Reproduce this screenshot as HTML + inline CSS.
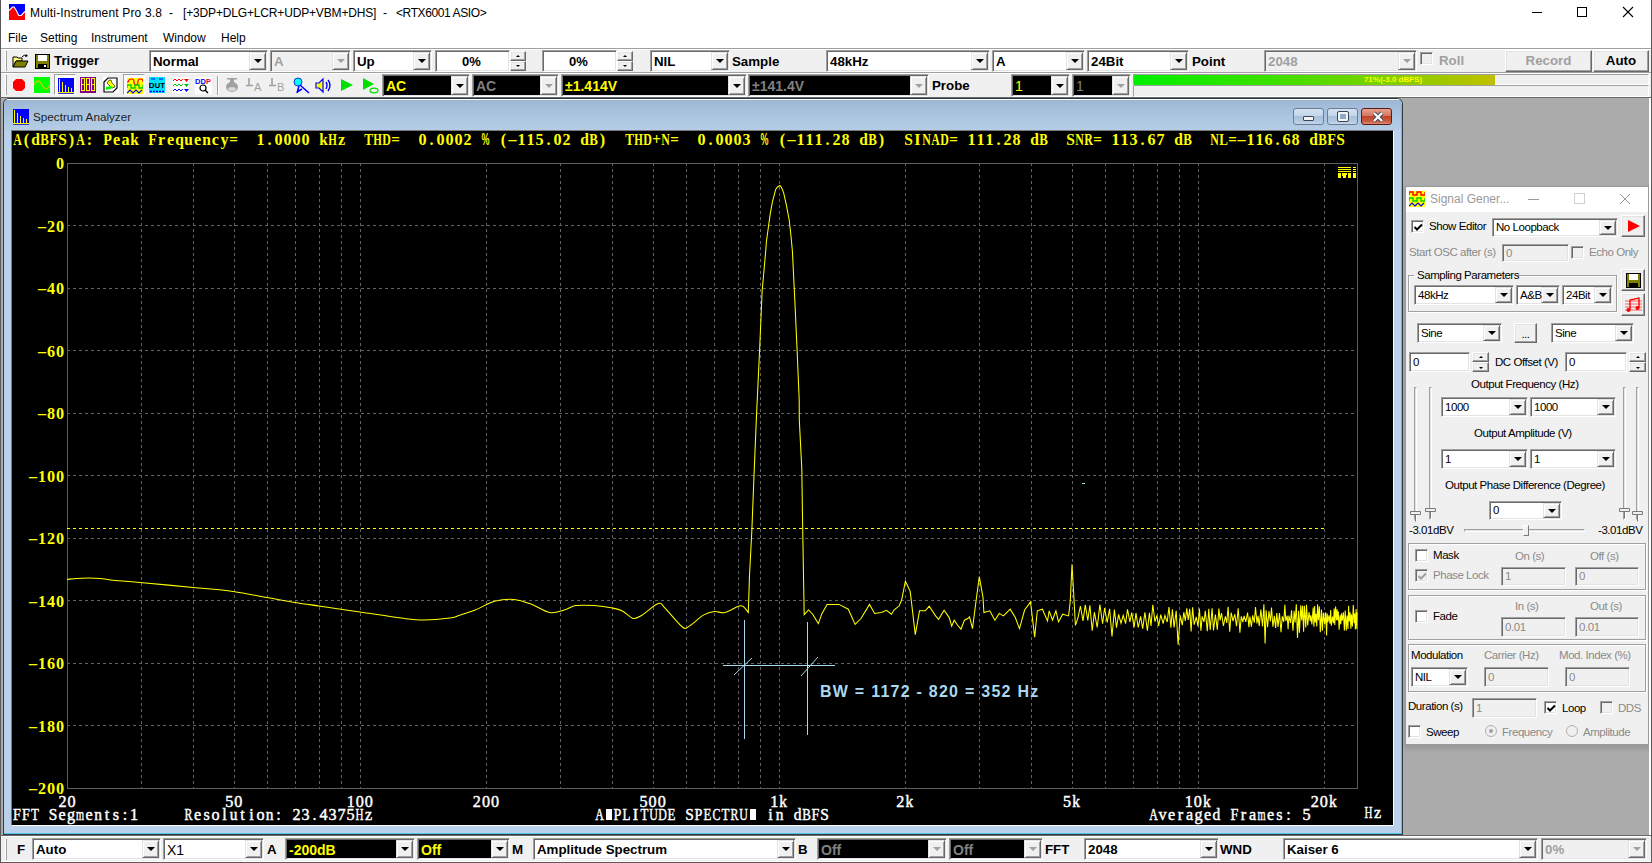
<!DOCTYPE html><html><head><meta charset="utf-8"><style>
*{box-sizing:border-box;margin:0;padding:0}
html,body{width:1652px;height:863px;overflow:hidden;background:#f0f0f0;font-family:"Liberation Sans",sans-serif;position:relative}
.a{position:absolute}
.t{position:absolute;white-space:nowrap;line-height:1}
/* sunken combo */
.cb{position:absolute;background:#fff;border:1px solid;border-color:#a0a0a0 #fff #fff #a0a0a0;box-shadow:inset 1px 1px #696969,inset -1px -1px #e3e3e3}
.cb.dis{background:#f0f0f0}
.cb.blk{background:#000}
.dd{position:absolute;top:1px;bottom:1px;right:1px;width:17px;background:#f0f0f0;border:1px solid;border-color:#e3e3e3 #696969 #696969 #e3e3e3;box-shadow:inset 1px 1px #fff,inset -1px -1px #a0a0a0}
.dd:after{content:"";position:absolute;left:50%;top:50%;margin-left:-4px;margin-top:-2px;border-left:4px solid transparent;border-right:4px solid transparent;border-top:4px solid #000}
.dd.g:after{border-top-color:#a0a0a0}
.btn{position:absolute;background:#f0f0f0;border:1px solid;border-color:#fff #696969 #696969 #fff;box-shadow:inset -1px -1px #a0a0a0,inset 1px 1px #e3e3e3}
.chk{position:absolute;width:13px;height:13px;background:#fff;border:1px solid;border-color:#a0a0a0 #fff #fff #a0a0a0;box-shadow:inset 1px 1px #696969,inset -1px -1px #e3e3e3}
.chk.dis{background:#f0f0f0}
</style></head><body>
<div class="a" style="left:0px;top:0px;width:1652px;height:48px;background:#fff"></div>
<div class="a" style="left:0px;top:0px;width:1px;height:863px;background:#5a5a5a"></div>
<div class="a" style="left:1651px;top:0px;width:1px;height:863px;background:#5a5a5a"></div>
<svg class="a" style="left:9px;top:4px" width="16" height="16" viewBox="0 0 16 16"><rect width="16" height="16" fill="#0000ff"/><path d="M0 6.5L3.5 3H5L7 6L9.8 11.5H12.2L16 7.5V16H0Z" fill="#ff0000"/><path d="M0 6.5L3.5 3H5L7 6L9.8 11.5H12.2L16 7.5" stroke="#fff" stroke-width="1.1" fill="none"/></svg>
<div class="t" style="left:30px;top:7px;font-size:12px;color:#000;font-weight:normal;font-family:'Liberation Sans', sans-serif;letter-spacing:0.17px">Multi-Instrument Pro 3.8</div>
<div class="t" style="left:169px;top:7px;font-size:12px;color:#000;font-weight:normal;font-family:'Liberation Sans', sans-serif;">-</div>
<div class="t" style="left:183px;top:7px;font-size:12px;color:#000;font-weight:normal;font-family:'Liberation Sans', sans-serif;letter-spacing:-0.16px">[+3DP+DLG+LCR+UDP+VBM+DHS]</div>
<div class="t" style="left:383px;top:7px;font-size:12px;color:#000;font-weight:normal;font-family:'Liberation Sans', sans-serif;">-</div>
<div class="t" style="left:396px;top:7px;font-size:12px;color:#000;font-weight:normal;font-family:'Liberation Sans', sans-serif;letter-spacing:-0.4px">&lt;RTX6001 ASIO&gt;</div>
<div class="a" style="left:1532px;top:12px;width:10px;height:1px;background:#000"></div>
<div class="a" style="left:1577px;top:7px;width:10px;height:10px;border:1px solid #000"></div>
<svg class="a" style="left:1622px;top:6px" width="12" height="12"><path d="M1 1L11 11M11 1L1 11" stroke="#000" stroke-width="1.1"/></svg>
<div class="t" style="left:8px;top:32px;font-size:12px;color:#000;font-weight:normal;font-family:'Liberation Sans', sans-serif;">File</div>
<div class="t" style="left:40px;top:32px;font-size:12px;color:#000;font-weight:normal;font-family:'Liberation Sans', sans-serif;">Setting</div>
<div class="t" style="left:91px;top:32px;font-size:12px;color:#000;font-weight:normal;font-family:'Liberation Sans', sans-serif;">Instrument</div>
<div class="t" style="left:163px;top:32px;font-size:12px;color:#000;font-weight:normal;font-family:'Liberation Sans', sans-serif;">Window</div>
<div class="t" style="left:221px;top:32px;font-size:12px;color:#000;font-weight:normal;font-family:'Liberation Sans', sans-serif;">Help</div>
<div class="a" style="left:1px;top:48px;width:1650px;height:1px;background:#a0a0a0"></div>
<div class="a" style="left:1px;top:72px;width:1650px;height:1px;background:#a0a0a0"></div>
<div class="a" style="left:1px;top:73px;width:1650px;height:1px;background:#fff"></div>
<div class="a" style="left:1px;top:49px;width:1650px;height:1px;background:#fff"></div>
<div class="a" style="left:5px;top:51px;width:1px;height:20px;background:#fff"></div>
<div class="a" style="left:6px;top:51px;width:1px;height:20px;background:#a0a0a0"></div>
<div class="a" style="left:5px;top:75px;width:1px;height:20px;background:#fff"></div>
<div class="a" style="left:6px;top:75px;width:1px;height:20px;background:#a0a0a0"></div>
<svg class="a" style="left:12px;top:53px" width="17" height="16" viewBox="0 0 17 16"><path d="M1 4h4l1 1h4v3H4L1 14Z" fill="#ffff80" stroke="#000"/><path d="M1 14L4 8h12l-3 6Z" fill="#808000" stroke="#000"/><path d="M10 4Q12 1 15 3" stroke="#000" fill="none"/><path d="M14 1l2 2-3 1" fill="#000"/></svg>
<svg class="a" style="left:35px;top:54px" width="15" height="15" viewBox="0 0 15 15"><rect x="0.5" y="0.5" width="14" height="14" fill="#808000" stroke="#000"/><rect x="3" y="1" width="9" height="6" fill="#fff"/><rect x="3" y="10" width="9" height="4" fill="#000"/><rect x="9" y="11" width="2" height="2" fill="#fff"/></svg>
<div class="t" style="left:54px;top:54px;font-size:13.3px;color:#000;font-weight:bold;font-family:'Liberation Sans', sans-serif;">Trigger</div>
<div class="cb" style="left:149px;top:50px;width:119px;height:22px;"><div class="dd "></div></div>
<div class="t" style="left:153px;top:55.0px;font-size:13.3px;color:#000;font-weight:bold;font-family:'Liberation Sans', sans-serif;">Normal</div>
<div class="cb dis" style="left:270px;top:50px;width:81px;height:22px;"><div class="dd g"></div></div>
<div class="t" style="left:274px;top:55.0px;font-size:13.3px;color:#a0a0a0;font-weight:bold;font-family:'Liberation Sans', sans-serif;">A</div>
<div class="cb" style="left:353px;top:50px;width:79px;height:22px;"><div class="dd "></div></div>
<div class="t" style="left:357px;top:55.0px;font-size:13.3px;color:#000;font-weight:bold;font-family:'Liberation Sans', sans-serif;">Up</div>
<div class="cb" style="left:435px;top:50px;width:75px;height:22px;"></div>
<div class="t" style="left:435px;top:55px;font-size:13px;color:#000;font-weight:bold;font-family:'Liberation Sans', sans-serif;width:73px;text-align:center">0%</div>
<div class="btn" style="left:510px;top:51px;width:16px;height:10px;"><div class="a" style="left:5px;top:3px;width:0;height:0;border-left:2px solid transparent;border-right:2px solid transparent;border-bottom:2px solid #000"></div></div>
<div class="btn" style="left:510px;top:61px;width:16px;height:10px;"><div class="a" style="left:5px;top:3px;width:0;height:0;border-left:2px solid transparent;border-right:2px solid transparent;border-top:2px solid #000"></div></div>
<div class="cb" style="left:542px;top:50px;width:75px;height:22px;"></div>
<div class="t" style="left:542px;top:55px;font-size:13px;color:#000;font-weight:bold;font-family:'Liberation Sans', sans-serif;width:73px;text-align:center">0%</div>
<div class="btn" style="left:617px;top:51px;width:16px;height:10px;"><div class="a" style="left:5px;top:3px;width:0;height:0;border-left:2px solid transparent;border-right:2px solid transparent;border-bottom:2px solid #000"></div></div>
<div class="btn" style="left:617px;top:61px;width:16px;height:10px;"><div class="a" style="left:5px;top:3px;width:0;height:0;border-left:2px solid transparent;border-right:2px solid transparent;border-top:2px solid #000"></div></div>
<div class="cb" style="left:650px;top:50px;width:80px;height:22px;"><div class="dd "></div></div>
<div class="t" style="left:654px;top:55.0px;font-size:13.3px;color:#000;font-weight:bold;font-family:'Liberation Sans', sans-serif;">NIL</div>
<div class="t" style="left:732px;top:55px;font-size:13.3px;color:#000;font-weight:bold;font-family:'Liberation Sans', sans-serif;">Sample</div>
<div class="cb" style="left:826px;top:50px;width:164px;height:22px;"><div class="dd "></div></div>
<div class="t" style="left:830px;top:55.0px;font-size:13.3px;color:#000;font-weight:bold;font-family:'Liberation Sans', sans-serif;">48kHz</div>
<div class="cb" style="left:992px;top:50px;width:93px;height:22px;"><div class="dd "></div></div>
<div class="t" style="left:996px;top:55.0px;font-size:13.3px;color:#000;font-weight:bold;font-family:'Liberation Sans', sans-serif;">A</div>
<div class="cb" style="left:1087px;top:50px;width:102px;height:22px;"><div class="dd "></div></div>
<div class="t" style="left:1091px;top:55.0px;font-size:13.3px;color:#000;font-weight:bold;font-family:'Liberation Sans', sans-serif;">24Bit</div>
<div class="t" style="left:1192px;top:55px;font-size:13.3px;color:#000;font-weight:bold;font-family:'Liberation Sans', sans-serif;">Point</div>
<div class="cb dis" style="left:1264px;top:50px;width:153px;height:22px;"><div class="dd g"></div></div>
<div class="t" style="left:1268px;top:55.0px;font-size:13.3px;color:#a0a0a0;font-weight:bold;font-family:'Liberation Sans', sans-serif;">2048</div>
<div class="chk dis" style="left:1420px;top:52px;width:13px;height:13px;"></div>
<div class="t" style="left:1439px;top:54px;font-size:13.3px;color:#a0a0a0;font-weight:bold;font-family:'Liberation Sans', sans-serif;">Roll</div>
<div class="btn" style="left:1505px;top:50px;width:87px;height:22px;"></div>
<div class="t" style="left:1505px;top:54px;font-size:13.3px;color:#a0a0a0;font-weight:bold;font-family:'Liberation Sans', sans-serif;width:87px;text-align:center">Record</div>
<div class="btn" style="left:1593px;top:50px;width:56px;height:22px;"></div>
<div class="t" style="left:1593px;top:54px;font-size:13.3px;color:#000;font-weight:bold;font-family:'Liberation Sans', sans-serif;width:56px;text-align:center">Auto</div>
<svg class="a" style="left:12px;top:78px" width="14" height="14" viewBox="0 0 14 14"><path d="M4 1h6l3 3v6l-3 3H4L1 10V4Z" fill="#ff0000"/></svg>
<svg class="a" style="left:34px;top:77px" width="16" height="16" viewBox="0 0 16 16"><rect width="16" height="16" fill="#00ff00"/><path d="M0 8Q4 0 8 8T16 8" stroke="#c8c800" stroke-width="1.3" fill="none"/></svg>
<div class="a" style="left:54px;top:74px;width:22px;height:21px;border:1px solid;border-color:#a0a0a0 #fff #fff #a0a0a0;background:#fafafa"></div>
<svg class="a" style="left:58px;top:78px" width="16" height="16" viewBox="0 0 16 16"><rect width="16" height="16" fill="#0000ff"/><path d="M1.5 1v13M4.5 4v10M7.5 7v7M10.5 9v5M13.5 10v4" stroke="#ffff00" stroke-width="1"/><rect x="0" y="14" width="16" height="1.2" fill="#ffff00"/></svg>
<svg class="a" style="left:80px;top:77px" width="16" height="16" viewBox="0 0 16 16"><rect width="16" height="16" fill="#800080"/><g fill="none" stroke="#ffff00" stroke-width="1"><rect x="1.5" y="1.5" width="3" height="6"/><rect x="1.5" y="7.5" width="3" height="6"/><rect x="6.5" y="1.5" width="3" height="6"/><rect x="6.5" y="7.5" width="3" height="6"/><rect x="11.5" y="1.5" width="3" height="6"/><rect x="11.5" y="7.5" width="3" height="6"/></g></svg>
<svg class="a" style="left:103px;top:77px" width="16" height="16" viewBox="0 0 16 16"><rect width="16" height="16" fill="#fff"/><path d="M1 5L5 1h9v10l-4 4H1Z" fill="#fff" stroke="#000" stroke-width="1.2"/><path d="M4 6q2-4 4-3l1 3q3 2 3 4l-3 1Z" fill="#ffff00" stroke="#000" stroke-width="0.6"/><path d="M3 10l5-1 2 2-3 1-4 1Z" fill="#00ff00"/></svg>
<div class="a" style="left:123px;top:74px;width:22px;height:21px;border:1px solid;border-color:#a0a0a0 #fff #fff #a0a0a0;background:#fafafa"></div>
<svg class="a" style="left:127px;top:78px" width="16" height="16" viewBox="0 0 16 16"><rect width="16" height="16" fill="#ffff00"/><path d="M0 4h1Q2 1 4 1h1q2 0 2 3t2 3h0q2 0 2-3t2-3h1q2 0 2 3" stroke="#ff0000" fill="none" stroke-width="1.2"/><path d="M0 10V7h4v3h4V7h4v3h4V7" stroke="#00d000" fill="none" stroke-width="1.4"/><path d="M0 15l3-3 3 3 3-3 3 3 3-3" stroke="#0000ff" fill="none" stroke-width="1.1"/></svg>
<svg class="a" style="left:149px;top:77px" width="16" height="16" viewBox="0 0 16 16"><rect width="16" height="16" fill="#00e0ff"/><path d="M2 2h4M10 2h4" stroke="#0000ff"/><text x="8" y="11" font-size="8" font-weight="bold" fill="#000" text-anchor="middle" font-family="Liberation Sans">DUT</text><path d="M1 14.5h14" stroke="#0000ff" stroke-width="1.5" stroke-dasharray="2 1"/></svg>
<svg class="a" style="left:172px;top:77px;background:#fff" width="17" height="16" viewBox="0 0 17 16"><g fill="none" stroke-width="1"><path d="M1 4l2-2 2 2 2-2 2 2 2-2" stroke="#ff0000"/><path d="M1 9l2-2 2 2 2-2 2 2 2-2" stroke="#00c000"/><path d="M1 14l2-2 2 2 2-2 2 2 2-2" stroke="#0000ff"/></g><path d="M12 2h5l-2.5 3Z" fill="#ff0000"/><path d="M12 7h5l-2.5 3Z" fill="#00c000"/><path d="M12 12h5l-2.5 3Z" fill="#0000ff"/></svg>
<svg class="a" style="left:195px;top:77px;background:#fff" width="17" height="17" viewBox="0 0 17 17"><text x="0" y="7" font-size="7.5" font-weight="bold" fill="#0000ff" font-family="Liberation Sans">DD</text><text x="11" y="7" font-size="7.5" font-weight="bold" fill="#ff0000" font-family="Liberation Sans">P</text><circle cx="8" cy="11" r="3" fill="none" stroke="#000" stroke-width="1.2"/><path d="M10 13l3 3" stroke="#000" stroke-width="1.5"/></svg>
<div class="a" style="left:217px;top:76px;width:1px;height:19px;background:#a0a0a0"></div>
<div class="a" style="left:218px;top:76px;width:1px;height:19px;background:#fff"></div>
<svg class="a" style="left:224px;top:77px" width="16" height="16" viewBox="0 0 16 16"><rect x="6" y="1" width="4" height="5" fill="#a0a0a0"/><rect x="3" y="1" width="10" height="1.5" fill="#a0a0a0"/><ellipse cx="8" cy="10" rx="6" ry="5" fill="#a0a0a0"/><ellipse cx="8" cy="12" rx="4" ry="2" fill="#d8d8d8"/></svg>
<svg class="a" style="left:246px;top:78px" width="18" height="14" viewBox="0 0 18 14"><path d="M3 0v7M0 7.5h7" stroke="#a0a0a0" stroke-width="1.6"/><text x="8" y="13" font-size="11" fill="#a0a0a0" font-family="Liberation Sans">A</text></svg>
<svg class="a" style="left:269px;top:78px" width="18" height="14" viewBox="0 0 18 14"><path d="M3 0v7M0 7.5h7" stroke="#a0a0a0" stroke-width="1.6"/><text x="8" y="13" font-size="11" fill="#a0a0a0" font-family="Liberation Sans">B</text></svg>
<svg class="a" style="left:293px;top:77px" width="18" height="17" viewBox="0 0 18 17"><circle cx="5" cy="5" r="4" fill="#00ffff" stroke="#0000c0" stroke-width="0.8"/><path d="M7 8l9 8M6 9l-2 7M9 12l-5 3" stroke="#0000ff" stroke-width="1.6"/></svg>
<svg class="a" style="left:315px;top:77px" width="18" height="17" viewBox="0 0 18 17"><path d="M1 6h3l4-4v13l-4-4H1Z" fill="#ffff00" stroke="#0000ff" stroke-width="1.2"/><path d="M11 5q2 3 0 7M13 3q4 5 0 11" stroke="#0000ff" stroke-width="1.4" fill="none"/></svg>
<svg class="a" style="left:341px;top:79px" width="12" height="12" viewBox="0 0 12 12"><path d="M0 0L12 6L0 12Z" fill="#00e000"/></svg>
<svg class="a" style="left:363px;top:78px" width="16" height="16" viewBox="0 0 16 16"><path d="M0 0L11 6L0 12Z" fill="#00e000"/><ellipse cx="11" cy="12.5" rx="4" ry="2.3" fill="none" stroke="#00e000" stroke-width="1.2"/></svg>
<div class="cb blk" style="left:382px;top:74px;width:88px;height:23px;"><div class="dd "></div></div>
<div class="t" style="left:386px;top:79px;font-size:14px;color:#ffff00;font-weight:bold;font-family:'Liberation Sans', sans-serif;">AC</div>
<div class="cb blk" style="left:472px;top:74px;width:87px;height:23px;"><div class="dd g"></div></div>
<div class="t" style="left:476px;top:79px;font-size:14px;color:#808080;font-weight:bold;font-family:'Liberation Sans', sans-serif;">AC</div>
<div class="cb blk" style="left:561px;top:74px;width:186px;height:23px;"><div class="dd "></div></div>
<div class="t" style="left:565px;top:79px;font-size:14px;color:#ffff00;font-weight:bold;font-family:'Liberation Sans', sans-serif;">±1.414V</div>
<div class="cb blk" style="left:748px;top:74px;width:181px;height:23px;"><div class="dd g"></div></div>
<div class="t" style="left:752px;top:79px;font-size:14px;color:#808080;font-weight:bold;font-family:'Liberation Sans', sans-serif;">±141.4V</div>
<div class="t" style="left:932px;top:79px;font-size:13.3px;color:#000;font-weight:bold;font-family:'Liberation Sans', sans-serif;">Probe</div>
<div class="cb blk" style="left:1011px;top:74px;width:59px;height:23px;"><div class="dd "></div></div>
<div class="t" style="left:1015px;top:79px;font-size:14px;color:#ffff00;font-weight:normal;font-family:'Liberation Sans', sans-serif;">1</div>
<div class="cb blk" style="left:1072px;top:74px;width:59px;height:23px;"><div class="dd g"></div></div>
<div class="t" style="left:1076px;top:79px;font-size:14px;color:#808080;font-weight:normal;font-family:'Liberation Sans', sans-serif;">1</div>
<div class="a" style="left:1133px;top:74px;width:516px;height:11px;border:1px solid;border-color:#a0a0a0 #fff #fff #a0a0a0;background:#f0f0f0"></div>
<div class="a" style="left:1134px;top:75px;width:361px;height:10px;background:linear-gradient(90deg,#00f000,#40e000 40%,#c0c000)"></div>
<div class="t" style="left:1134px;top:76px;font-size:8px;color:#ffff00;font-weight:bold;font-family:'Liberation Sans', sans-serif;width:518px;text-align:center">71%(-3.0 dBFS)</div>
<div class="a" style="left:1133px;top:85px;width:516px;height:12px;border:1px solid;border-color:#a0a0a0 #fff #fff #a0a0a0;background:#f0f0f0"></div>
<div class="a" style="left:1px;top:97px;width:1650px;height:1px;background:#696969"></div>
<div class="a" style="left:1px;top:98px;width:1650px;height:738px;background:#ababab"></div>
<div class="a" style="left:3px;top:98px;width:1400px;height:737px;background:#2f3a45;border-radius:6px 6px 0 0"></div>
<div class="a" style="left:4px;top:99px;width:1398px;height:735px;background:#b9d1ea;border-radius:5px 5px 0 0"></div>
<div class="a" style="left:4px;top:99px;width:1398px;height:31px;background:linear-gradient(#fff 0,#fff 1px,#9cb6d4 1px,#a8c2de 14px,#b4cce6 30px);border-radius:5px 5px 0 0"></div>
<div class="a" style="left:1401px;top:104px;width:1px;height:730px;background:#4cc8ea"></div>
<div class="a" style="left:4px;top:833px;width:1398px;height:1px;background:#4cc8ea"></div>
<svg class="a" style="left:13px;top:109px" width="16" height="16" viewBox="0 0 16 16"><rect width="16" height="16" fill="#0000ff"/><path d="M1.5 1v13M4.5 4v10M7.5 7v7M10.5 9v5M13.5 10v4" stroke="#ffff00" stroke-width="1" shape-rendering="crispEdges"/><rect x="0" y="14" width="16" height="1.2" fill="#ffff00"/></svg>
<div class="t" style="left:33px;top:111px;font-size:11.7px;color:#1e1e1e;font-weight:normal;font-family:'Liberation Sans', sans-serif;">Spectrum Analyzer</div>
<div class="a" style="left:1293px;top:108px;width:31px;height:17px;background:linear-gradient(#d4e2f1,#c3d5ea 45%,#a9c1dc 50%,#b1c8e2 80%,#c6d8ec);border:1px solid #6a7d95;border-radius:3px"><div class="a" style="left:9px;top:7px;width:11px;height:5px;background:#f4f4f4;border:1px solid #3c4656;border-radius:1px"></div></div>
<div class="a" style="left:1327px;top:108px;width:31px;height:17px;background:linear-gradient(#d4e2f1,#c3d5ea 45%,#a9c1dc 50%,#b1c8e2 80%,#c6d8ec);border:1px solid #6a7d95;border-radius:3px"><div class="a" style="left:10px;top:3px;width:10px;height:9px;border:2px solid #f4f4f4;outline:1px solid #3c4656;border-radius:1px;background:#8ea8c8"></div></div>
<div class="a" style="left:1361px;top:108px;width:31px;height:17px;background:linear-gradient(#e8a08e,#d47762 45%,#c0442a 50%,#c85a3e 80%,#e08a70);border:1px solid #5a1a18;border-radius:3px"><svg class="a" style="left:9px;top:2px" width="14" height="12"><path d="M3 2L11 10M11 2L3 10" stroke="#3c4656" stroke-width="4"/><path d="M3 2L11 10M11 2L3 10" stroke="#fafafa" stroke-width="2.4"/></svg></div>
<div class="a" style="left:11px;top:130px;width:1383px;height:696px;background:#000;border-top:1px solid #7a7a7a;border-left:1px solid #7a7a7a;border-right:1px solid #fff;border-bottom:1px solid #fff"></div>
<svg class="a" style="left:0;top:0" width="1652" height="863" shape-rendering="crispEdges">
<line x1="141.5" y1="163" x2="141.5" y2="788" stroke="#626262" stroke-dasharray="3 3"/>
<line x1="193.5" y1="163" x2="193.5" y2="788" stroke="#626262" stroke-dasharray="3 3"/>
<line x1="234.5" y1="163" x2="234.5" y2="788" stroke="#626262" stroke-dasharray="3 3"/>
<line x1="267.5" y1="163" x2="267.5" y2="788" stroke="#626262" stroke-dasharray="3 3"/>
<line x1="295.5" y1="163" x2="295.5" y2="788" stroke="#626262" stroke-dasharray="3 3"/>
<line x1="319.5" y1="163" x2="319.5" y2="788" stroke="#626262" stroke-dasharray="3 3"/>
<line x1="341.5" y1="163" x2="341.5" y2="788" stroke="#626262" stroke-dasharray="3 3"/>
<line x1="360.5" y1="163" x2="360.5" y2="788" stroke="#626262" stroke-dasharray="3 3"/>
<line x1="486.5" y1="163" x2="486.5" y2="788" stroke="#626262" stroke-dasharray="3 3"/>
<line x1="560.5" y1="163" x2="560.5" y2="788" stroke="#626262" stroke-dasharray="3 3"/>
<line x1="612.5" y1="163" x2="612.5" y2="788" stroke="#626262" stroke-dasharray="3 3"/>
<line x1="653.5" y1="163" x2="653.5" y2="788" stroke="#626262" stroke-dasharray="3 3"/>
<line x1="686.5" y1="163" x2="686.5" y2="788" stroke="#626262" stroke-dasharray="3 3"/>
<line x1="714.5" y1="163" x2="714.5" y2="788" stroke="#626262" stroke-dasharray="3 3"/>
<line x1="738.5" y1="163" x2="738.5" y2="788" stroke="#626262" stroke-dasharray="3 3"/>
<line x1="760.5" y1="163" x2="760.5" y2="788" stroke="#626262" stroke-dasharray="3 3"/>
<line x1="779.5" y1="163" x2="779.5" y2="788" stroke="#626262" stroke-dasharray="3 3"/>
<line x1="905.5" y1="163" x2="905.5" y2="788" stroke="#626262" stroke-dasharray="3 3"/>
<line x1="979.5" y1="163" x2="979.5" y2="788" stroke="#626262" stroke-dasharray="3 3"/>
<line x1="1031.5" y1="163" x2="1031.5" y2="788" stroke="#626262" stroke-dasharray="3 3"/>
<line x1="1072.5" y1="163" x2="1072.5" y2="788" stroke="#626262" stroke-dasharray="3 3"/>
<line x1="1105.5" y1="163" x2="1105.5" y2="788" stroke="#626262" stroke-dasharray="3 3"/>
<line x1="1133.5" y1="163" x2="1133.5" y2="788" stroke="#626262" stroke-dasharray="3 3"/>
<line x1="1157.5" y1="163" x2="1157.5" y2="788" stroke="#626262" stroke-dasharray="3 3"/>
<line x1="1179.5" y1="163" x2="1179.5" y2="788" stroke="#626262" stroke-dasharray="3 3"/>
<line x1="1198.5" y1="163" x2="1198.5" y2="788" stroke="#626262" stroke-dasharray="3 3"/>
<line x1="1324.5" y1="163" x2="1324.5" y2="788" stroke="#626262" stroke-dasharray="3 3"/>
<line x1="67" y1="225.5" x2="1354" y2="225.5" stroke="#626262" stroke-dasharray="3 3" stroke-dashoffset="0"/>
<line x1="67" y1="288.5" x2="1354" y2="288.5" stroke="#626262" stroke-dasharray="3 3" stroke-dashoffset="0"/>
<line x1="67" y1="350.5" x2="1354" y2="350.5" stroke="#626262" stroke-dasharray="3 3" stroke-dashoffset="0"/>
<line x1="67" y1="413.5" x2="1354" y2="413.5" stroke="#626262" stroke-dasharray="3 3" stroke-dashoffset="0"/>
<line x1="67" y1="475.5" x2="1354" y2="475.5" stroke="#626262" stroke-dasharray="3 3" stroke-dashoffset="0"/>
<line x1="67" y1="538.5" x2="1354" y2="538.5" stroke="#626262" stroke-dasharray="3 3" stroke-dashoffset="0"/>
<line x1="67" y1="600.5" x2="1354" y2="600.5" stroke="#626262" stroke-dasharray="3 3" stroke-dashoffset="0"/>
<line x1="67" y1="663.5" x2="1354" y2="663.5" stroke="#626262" stroke-dasharray="3 3" stroke-dashoffset="0"/>
<line x1="67" y1="725.5" x2="1354" y2="725.5" stroke="#626262" stroke-dasharray="3 3" stroke-dashoffset="0"/>
<rect x="67.5" y="163.5" width="1290" height="625" fill="none" stroke="#5c5c5c"/>
<line x1="67" y1="528.5" x2="1325" y2="528.5" stroke="#ffff00" stroke-dasharray="3 3" stroke-dashoffset="0"/>
</svg>
<svg class="a" style="left:0;top:0" width="1652" height="863">
<text transform="scale(0.56,1)" x="867.0" y="145.5" fill="#ffff00" font-family="Liberation Sans" font-weight="bold" font-size="16" text-anchor="middle">%</text>
<text transform="scale(0.56,1)" x="1365.2" y="145.5" fill="#ffff00" font-family="Liberation Sans" font-weight="bold" font-size="16" text-anchor="middle">%</text>
<text transform="scale(0.7,1)" x="25.0 115.0 552.1 925.0 950.7 1323.6 1336.4 1349.3 1542.1 1555.0 1735.0" y="145.5" fill="#ffff00" font-family="Liberation Serif" font-weight="bold"  font-size="17" text-anchor="middle">AADDNNADNRN</text>
<text transform="scale(0.95,1)" x="27.9 75.3 94.2 122.6 132.1 170.0 179.5 207.9 226.8 236.3 274.2 283.7 293.2 302.6 312.1 321.6 359.5 444.7 454.2 463.7 473.2 482.6 492.1 530.0 539.5 548.9 558.4 567.9 577.4 586.8 596.3 634.2 738.4 747.9 757.4 766.8 776.3 785.8 823.7 833.2 842.6 852.1 861.6 871.1 880.5 890.0 927.9 965.8 1022.6 1032.1 1041.6 1051.1 1060.5 1070.0 1174.2 1183.7 1193.2 1202.6 1212.1 1221.6 1306.8 1316.3 1325.8 1335.3 1344.7 1354.2 1363.7" y="145.5" fill="#ffff00" font-family="Liberation Serif" font-weight="bold"  font-size="17" text-anchor="middle">():eareecy1.0000z0.0002(–115.02)0.0003(–111.28)I111.28113.67–116.68</text>
<text transform="scale(0.91,1)" x="39.0 68.7 147.8 197.3 207.1 226.9 355.5 642.3 948.9 998.4 1136.8 1176.4 1295.1 1443.4 1473.1" y="145.5" fill="#ffff00" font-family="Liberation Serif" font-weight="bold"  font-size="17" text-anchor="middle">dSkqunkddSdSddS</text>
<text transform="scale(0.76,1)" x="58.6 484.9 780.9 828.3 1148.0 1373.0 1562.5 1609.9 1740.1" y="145.5" fill="#ffff00" font-family="Liberation Serif" font-weight="bold"  font-size="17" text-anchor="middle">BTBTBBBLB</text>
<text transform="scale(0.83,1)" x="64.5 129.5 183.7 1604.2" y="145.5" fill="#ffff00" font-family="Liberation Serif" font-weight="bold"  font-size="17" text-anchor="middle">FPFF</text>
<text transform="scale(0.89,1)" x="262.4 444.4 737.6 757.9 1071.3 1233.1 1384.8" y="145.5" fill="#ffff00" font-family="Liberation Serif" font-weight="bold"  font-size="17" text-anchor="middle">==+====</text>
<text transform="scale(0.65,1)" x="511.5 580.8 982.3" y="145.5" fill="#ffff00" font-family="Liberation Serif" font-weight="bold"  font-size="17" text-anchor="middle">HHH</text>
<text transform="scale(0.95,1)" x="63.2" y="169.5" fill="#ffff00" font-family="Liberation Serif" font-weight="bold"  font-size="17" text-anchor="middle">0</text>
<text transform="scale(0.95,1)" x="44.2 53.7 63.2" y="232.0" fill="#ffff00" font-family="Liberation Serif" font-weight="bold"  font-size="17" text-anchor="middle">–20</text>
<text transform="scale(0.95,1)" x="44.2 53.7 63.2" y="294.5" fill="#ffff00" font-family="Liberation Serif" font-weight="bold"  font-size="17" text-anchor="middle">–40</text>
<text transform="scale(0.95,1)" x="44.2 53.7 63.2" y="357.0" fill="#ffff00" font-family="Liberation Serif" font-weight="bold"  font-size="17" text-anchor="middle">–60</text>
<text transform="scale(0.95,1)" x="44.2 53.7 63.2" y="419.5" fill="#ffff00" font-family="Liberation Serif" font-weight="bold"  font-size="17" text-anchor="middle">–80</text>
<text transform="scale(0.95,1)" x="34.7 44.2 53.7 63.2" y="482.0" fill="#ffff00" font-family="Liberation Serif" font-weight="bold"  font-size="17" text-anchor="middle">–100</text>
<text transform="scale(0.95,1)" x="34.7 44.2 53.7 63.2" y="544.5" fill="#ffff00" font-family="Liberation Serif" font-weight="bold"  font-size="17" text-anchor="middle">–120</text>
<text transform="scale(0.95,1)" x="34.7 44.2 53.7 63.2" y="607.0" fill="#ffff00" font-family="Liberation Serif" font-weight="bold"  font-size="17" text-anchor="middle">–140</text>
<text transform="scale(0.95,1)" x="34.7 44.2 53.7 63.2" y="669.5" fill="#ffff00" font-family="Liberation Serif" font-weight="bold"  font-size="17" text-anchor="middle">–160</text>
<text transform="scale(0.95,1)" x="34.7 44.2 53.7 63.2" y="732.0" fill="#ffff00" font-family="Liberation Serif" font-weight="bold"  font-size="17" text-anchor="middle">–180</text>
<text transform="scale(0.95,1)" x="34.7 44.2 53.7 63.2" y="794.5" fill="#ffff00" font-family="Liberation Serif" font-weight="bold"  font-size="17" text-anchor="middle">–200</text>
<text transform="scale(0.95,1)" x="65.8 75.3" y="807" fill="#ffffff" font-family="Liberation Serif" font-weight="normal" stroke="#fff" stroke-width="0.45" font-size="17" text-anchor="middle">20</text>
<text transform="scale(0.95,1)" x="241.3 250.8" y="807" fill="#ffffff" font-family="Liberation Serif" font-weight="normal" stroke="#fff" stroke-width="0.45" font-size="17" text-anchor="middle">50</text>
<text transform="scale(0.95,1)" x="369.3 378.8 388.2" y="807" fill="#ffffff" font-family="Liberation Serif" font-weight="normal" stroke="#fff" stroke-width="0.45" font-size="17" text-anchor="middle">100</text>
<text transform="scale(0.95,1)" x="502.0 511.5 521.0" y="807" fill="#ffffff" font-family="Liberation Serif" font-weight="normal" stroke="#fff" stroke-width="0.45" font-size="17" text-anchor="middle">200</text>
<text transform="scale(0.95,1)" x="677.5 687.0 696.5" y="807" fill="#ffffff" font-family="Liberation Serif" font-weight="normal" stroke="#fff" stroke-width="0.45" font-size="17" text-anchor="middle">500</text>
<text transform="scale(0.95,1)" x="815.0" y="807" fill="#ffffff" font-family="Liberation Serif" font-weight="normal" stroke="#fff" stroke-width="0.45" font-size="17" text-anchor="middle">1</text>
<text transform="scale(0.91,1)" x="860.7" y="807" fill="#ffffff" font-family="Liberation Serif" font-weight="normal" stroke="#fff" stroke-width="0.45" font-size="17" text-anchor="middle">k</text>
<text transform="scale(0.95,1)" x="947.8" y="807" fill="#ffffff" font-family="Liberation Serif" font-weight="normal" stroke="#fff" stroke-width="0.45" font-size="17" text-anchor="middle">2</text>
<text transform="scale(0.91,1)" x="999.3" y="807" fill="#ffffff" font-family="Liberation Serif" font-weight="normal" stroke="#fff" stroke-width="0.45" font-size="17" text-anchor="middle">k</text>
<text transform="scale(0.95,1)" x="1123.3" y="807" fill="#ffffff" font-family="Liberation Serif" font-weight="normal" stroke="#fff" stroke-width="0.45" font-size="17" text-anchor="middle">5</text>
<text transform="scale(0.91,1)" x="1182.5" y="807" fill="#ffffff" font-family="Liberation Serif" font-weight="normal" stroke="#fff" stroke-width="0.45" font-size="17" text-anchor="middle">k</text>
<text transform="scale(0.95,1)" x="1251.3 1260.8" y="807" fill="#ffffff" font-family="Liberation Serif" font-weight="normal" stroke="#fff" stroke-width="0.45" font-size="17" text-anchor="middle">10</text>
<text transform="scale(0.91,1)" x="1326.1" y="807" fill="#ffffff" font-family="Liberation Serif" font-weight="normal" stroke="#fff" stroke-width="0.45" font-size="17" text-anchor="middle">k</text>
<text transform="scale(0.95,1)" x="1384.0 1393.5" y="807" fill="#ffffff" font-family="Liberation Serif" font-weight="normal" stroke="#fff" stroke-width="0.45" font-size="17" text-anchor="middle">20</text>
<text transform="scale(0.91,1)" x="1464.6" y="807" fill="#ffffff" font-family="Liberation Serif" font-weight="normal" stroke="#fff" stroke-width="0.45" font-size="17" text-anchor="middle">k</text>
<text transform="scale(0.65,1)" x="2105.4" y="818" fill="#ffffff" font-family="Liberation Serif" font-weight="normal" stroke="#fff" stroke-width="0.45" font-size="17" text-anchor="middle">H</text>
<text transform="scale(0.95,1)" x="1450.0" y="818" fill="#ffffff" font-family="Liberation Serif" font-weight="normal" stroke="#fff" stroke-width="0.45" font-size="17" text-anchor="middle">z</text>
<text transform="scale(0.83,1)" x="20.5 31.3" y="820" fill="#ffffff" font-family="Liberation Serif" font-weight="normal" stroke="#fff" stroke-width="0.45" font-size="17" text-anchor="middle">FF</text>
<text transform="scale(0.76,1)" x="46.1" y="820" fill="#ffffff" font-family="Liberation Serif" font-weight="normal" stroke="#fff" stroke-width="0.45" font-size="17" text-anchor="middle">T</text>
<text transform="scale(0.91,1)" x="58.2 107.7" y="820" fill="#ffffff" font-family="Liberation Serif" font-weight="normal" stroke="#fff" stroke-width="0.45" font-size="17" text-anchor="middle">Sn</text>
<text transform="scale(0.95,1)" x="65.3 74.7 93.7 112.6 122.1 131.6 141.1" y="820" fill="#ffffff" font-family="Liberation Serif" font-weight="normal" stroke="#fff" stroke-width="0.45" font-size="17" text-anchor="middle">egets:1</text>
<text transform="scale(0.61,1)" x="131.1" y="820" fill="#ffffff" font-family="Liberation Serif" font-weight="normal" stroke="#fff" stroke-width="0.45" font-size="17" text-anchor="middle">m</text>
<text transform="scale(0.7,1)" x="269.3" y="820" fill="#ffffff" font-family="Liberation Serif" font-weight="normal" stroke="#fff" stroke-width="0.45" font-size="17" text-anchor="middle">R</text>
<text transform="scale(0.95,1)" x="207.9 217.4 226.8 236.3 255.3 264.7 274.2 293.2 312.1 321.6 331.1 340.5 350.0 359.5 368.9 387.9" y="820" fill="#ffffff" font-family="Liberation Serif" font-weight="normal" stroke="#fff" stroke-width="0.45" font-size="17" text-anchor="middle">esoltio:23.4375z</text>
<text transform="scale(0.91,1)" x="256.6 296.2" y="820" fill="#ffffff" font-family="Liberation Serif" font-weight="normal" stroke="#fff" stroke-width="0.45" font-size="17" text-anchor="middle">un</text>
<text transform="scale(0.65,1)" x="553.1" y="820" fill="#ffffff" font-family="Liberation Serif" font-weight="normal" stroke="#fff" stroke-width="0.45" font-size="17" text-anchor="middle">H</text>
<text transform="scale(0.7,1)" x="856.4 933.6 946.4 1023.6 1049.3 1062.1" y="820" fill="#ffffff" font-family="Liberation Serif" font-weight="normal" stroke="#fff" stroke-width="0.45" font-size="17" text-anchor="middle">AUDCRU</text>
<text transform="scale(0.83,1)" x="744.0 841.6 982.5" y="820" fill="#ffffff" font-family="Liberation Serif" font-weight="normal" stroke="#fff" stroke-width="0.45" font-size="17" text-anchor="middle">PPF</text>
<text transform="scale(0.76,1)" x="824.3 848.0 883.6 930.9 954.6 1061.2" y="820" fill="#ffffff" font-family="Liberation Serif" font-weight="normal" stroke="#fff" stroke-width="0.45" font-size="17" text-anchor="middle">LTEETB</text>
<text transform="scale(0.95,1)" x="668.9 811.1" y="820" fill="#ffffff" font-family="Liberation Serif" font-weight="normal" stroke="#fff" stroke-width="0.45" font-size="17" text-anchor="middle">Ii</text>
<text transform="scale(0.91,1)" x="757.7 856.6 876.4 906.0" y="820" fill="#ffffff" font-family="Liberation Serif" font-weight="normal" stroke="#fff" stroke-width="0.45" font-size="17" text-anchor="middle">SndS</text>
<text transform="scale(0.7,1)" x="1647.9" y="820" fill="#ffffff" font-family="Liberation Serif" font-weight="normal" stroke="#fff" stroke-width="0.45" font-size="17" text-anchor="middle">A</text>
<text transform="scale(0.95,1)" x="1223.7 1233.2 1242.6 1252.1 1261.6 1271.1 1308.9 1318.4 1337.4 1346.8 1356.3 1375.3" y="820" fill="#ffffff" font-family="Liberation Serif" font-weight="normal" stroke="#fff" stroke-width="0.45" font-size="17" text-anchor="middle">verageraes:5</text>
<text transform="scale(0.91,1)" x="1336.8" y="820" fill="#ffffff" font-family="Liberation Serif" font-weight="normal" stroke="#fff" stroke-width="0.45" font-size="17" text-anchor="middle">d</text>
<text transform="scale(0.83,1)" x="1487.3" y="820" fill="#ffffff" font-family="Liberation Serif" font-weight="normal" stroke="#fff" stroke-width="0.45" font-size="17" text-anchor="middle">F</text>
<text transform="scale(0.61,1)" x="2068.0" y="820" fill="#ffffff" font-family="Liberation Serif" font-weight="normal" stroke="#fff" stroke-width="0.45" font-size="17" text-anchor="middle">m</text>
<rect x="606" y="809" width="6" height="11" fill="#fff"/>
<rect x="750" y="809" width="6" height="11" fill="#fff"/>
<g fill="#ffff00" shape-rendering="crispEdges"><rect x="1338" y="167" width="13" height="1"/><rect x="1353" y="167" width="3" height="1"/><rect x="1338" y="169" width="13" height="1"/><rect x="1353" y="169" width="3" height="1"/><rect x="1338" y="171" width="13" height="1"/><rect x="1353" y="171" width="3" height="1"/><rect x="1338" y="173" width="3" height="5"/><path d="M1342 173h5l-1 5h-3Z"/><rect x="1348" y="173" width="3" height="5"/><rect x="1353" y="173" width="3" height="5"/></g>
</svg>
<svg class="a" style="left:0;top:0" width="1652" height="863"><path d="M67.0 579.4 C69.5 579.2 76.3 578.4 81.8 578.2 C87.3 578.0 95.2 578.1 100.0 578.4 C104.8 578.7 104.1 579.2 110.8 579.9 C117.5 580.6 126.2 581.2 139.9 582.5 C153.6 583.8 177.7 585.9 193.2 587.4 C208.7 588.9 220.8 589.8 233.1 591.5 C245.4 593.2 256.7 595.7 267.0 597.5 C277.3 599.3 286.2 601.0 294.9 602.4 C303.6 603.8 308.1 604.4 319.0 606.0 C329.9 607.6 346.3 610.0 360.0 612.0 C373.7 614.0 390.9 616.8 401.4 618.1 C411.9 619.4 415.1 620.0 423.2 620.0 C431.3 620.0 443.8 618.9 449.8 618.1 C455.9 617.3 455.3 616.6 459.5 615.2 C463.7 613.9 469.3 612.3 475.2 610.0 C481.1 607.7 488.2 603.1 494.6 601.3 C501.1 599.5 507.8 598.9 513.9 599.4 C520.0 599.9 525.4 602.0 531.4 604.2 C537.4 606.4 544.3 611.5 549.8 612.5 C555.3 613.5 559.9 611.1 564.3 610.0 C568.6 608.9 570.9 606.3 575.9 605.6 C580.9 604.9 588.2 605.2 594.3 605.6 C600.4 606.0 608.0 607.2 612.7 608.1 C617.4 609.0 619.0 609.3 622.4 611.0 C625.8 612.7 629.8 617.7 633.0 618.4 C636.2 619.1 637.6 617.8 641.8 615.3 C646.0 612.8 654.3 604.8 658.2 603.6 C662.1 602.4 661.0 604.2 665.0 608.1 C669.0 612.0 678.4 624.0 682.4 627.0 C686.4 630.0 685.6 628.1 689.2 626.1 C692.8 624.1 699.6 617.3 703.8 614.9 C708.0 612.5 710.9 612.0 714.4 611.6 C717.9 611.2 721.0 613.4 725.0 612.5 C729.0 611.6 735.5 607.2 738.6 606.2 C741.7 605.2 741.9 605.7 743.5 606.7 C745.1 607.8 747.5 611.5 748.3 612.5 L749.5 575.7 L751.9 529.5 L753.8 480.8 L756.3 420.0 L759.6 350.0 L762.1 291.7 L765.8 250.0 L766.4 241.7 L768.3 227.8 L770.1 214.9 L772.4 201.9 L775.7 189.4 L777.5 187.0 L779.9 185.4 L781.5 187.5 L783.6 192.6 L786.3 204.7 L789.1 219.5 L790.8 234.3 L792.4 251.0 L794.8 300.0 L797.1 350.0 L799.2 400.0 L799.3 420.0 L801.8 468.7 L802.5 517.3 L803.5 575.7 L804.2 614.6 L808.5 610.0 L812.7 614.2 L818.3 623.6 L822.0 613.4 L827.1 604.4 L839.0 604.4 L848.3 609.2 L855.1 624.4 L861.0 618.5 L869.5 604.4 L874.6 613.4 L881.4 612.5 L886.4 610.3 L891.5 614.2 L894.0 610.0 L899.2 605.8 L901.7 599.8 L905.4 581.2 L910.2 591.4 L915.3 634.6 L919.5 610.8 L925.4 610.8 L929.2 606.1 L935.6 615.9 L938.6 619.3 L944.1 610.3 L949.2 617.6 L951.7 626.1 L954.2 620.2 L957.6 625.3 L961.0 629.2 L964.4 620.2 L967.8 618.5 L969.5 616.8 L972.5 628.6 L976.3 599.0 L979.3 576.6 L983.0 597.3 L983.9 612.5 L989.8 610.8 L994.9 620.2 L999.2 613.4 L1003.4 615.9 L1005.9 613.4 L1010.2 609.2 L1015.3 617.6 L1019.5 628.6 L1024.6 610.0 L1030.5 602.0 L1034.7 637.1 L1037.3 610.8 L1042.4 609.2 L1047.5 621.0 L1049.2 610.8 L1052.5 620.2 L1055.9 610.8 L1058.5 621.9 L1062.7 614.2 L1068.6 615.9 L1070.3 600.7 L1072.0 564.2 L1073.7 593.9 L1075.4 625.3 L1078.0 617.6 L1080.4 606.0 L1083.0 620.9 L1085.3 604.8 L1087.8 620.5 L1089.9 605.2 L1092.2 630.7 L1094.4 612.2 L1097.2 627.5 L1099.9 604.6 L1102.6 623.8 L1104.6 608.0 L1107.2 622.3 L1109.6 608.8 L1112.0 636.5 L1114.4 609.6 L1116.5 627.6 L1118.6 614.3 L1121.0 623.2 L1123.2 615.4 L1125.6 623.7 L1127.5 609.4 L1129.9 622.0 L1131.7 612.7 L1134.1 627.4 L1136.0 613.0 L1138.2 627.5 L1140.6 616.3 L1142.7 628.6 L1144.9 612.4 L1147.4 630.7 L1149.4 612.7 L1151.0 626.0 L1152.8 604.8 L1155.0 621.7 L1156.9 615.3 L1158.6 625.8 L1160.8 614.7 L1163.1 623.6 L1164.9 615.5 L1167.2 622.0 L1169.0 607.0 L1170.9 627.7 L1172.4 609.4 L1174.1 627.4 L1176.2 610.7 L1178.1 644.8 L1180.2 615.4 L1182.3 625.1 L1183.8 612.2 L1185.3 620.9 L1186.8 608.4 L1188.2 620.0 L1189.7 608.7 L1191.1 631.4 L1192.6 607.3 L1194.2 624.7 L1196.3 616.9 L1198.0 626.3 L1199.4 608.5 L1200.9 630.8 L1202.2 616.4 L1204.0 621.9 L1205.3 610.9 L1207.3 631.2 L1208.8 608.8 L1210.2 630.0 L1212.1 608.3 L1213.5 630.5 L1215.4 614.5 L1217.3 629.6 L1218.9 608.6 L1220.1 620.4 L1221.5 613.0 L1223.4 625.8 L1225.4 616.4 L1226.8 622.9 L1228.1 606.7 L1229.7 631.7 L1231.2 612.5 L1233.0 621.1 L1234.8 614.2 L1236.5 626.2 L1238.2 608.3 L1239.9 632.6 L1241.3 616.3 L1242.9 622.2 L1244.1 615.8 L1245.8 621.9 L1247.6 612.5 L1248.9 627.1 L1249.9 616.6 L1251.4 626.8 L1252.7 615.3 L1254.3 622.7 L1255.5 607.1 L1257.0 623.4 L1258.0 615.8 L1259.2 626.0 L1260.9 609.5 L1262.5 626.5 L1263.9 604.2 L1265.1 643.6 L1266.1 610.2 L1267.6 627.2 L1268.9 611.2 L1270.4 621.4 L1271.5 607.6 L1272.9 626.6 L1274.4 615.9 L1275.6 628.0 L1276.8 613.0 L1278.0 626.9 L1279.5 613.1 L1281.0 632.2 L1282.3 616.3 L1283.7 621.8 L1284.9 604.9 L1285.8 621.0 L1287.2 615.7 L1288.1 629.3 L1288.9 615.5 L1290.5 622.9 L1291.5 610.3 L1293.0 630.8 L1294.1 610.7 L1295.1 622.5 L1296.3 604.3 L1297.5 638.0 L1298.6 610.7 L1299.4 632.8 L1300.8 605.4 L1301.7 620.5 L1302.6 605.7 L1303.6 631.8 L1304.4 605.9 L1305.8 627.4 L1306.5 604.7 L1307.7 625.5 L1309.0 612.2 L1310.3 621.1 L1310.9 615.2 L1311.9 624.4 L1313.2 607.5 L1313.9 626.8 L1314.6 606.1 L1315.2 622.6 L1316.0 613.9 L1316.8 626.5 L1317.6 604.2 L1318.4 620.2 L1319.4 606.5 L1320.3 632.2 L1321.5 609.6 L1322.4 630.8 L1323.4 612.9 L1324.7 624.5 L1325.7 612.3 L1326.6 635.6 L1327.2 613.6 L1327.9 622.1 L1329.0 615.3 L1330.0 623.7 L1330.7 610.0 L1331.3 625.8 L1332.6 616.6 L1333.5 623.2 L1334.2 608.6 L1334.8 625.0 L1335.6 606.6 L1336.5 620.1 L1337.1 609.2 L1337.7 620.3 L1338.3 611.6 L1339.1 629.8 L1340.1 615.4 L1340.8 624.2 L1341.4 613.4 L1342.3 620.6 L1343.4 612.2 L1344.4 630.6 L1345.2 610.6 L1346.3 630.5 L1347.1 615.6 L1348.0 629.0 L1348.6 605.7 L1349.3 621.4 L1350.1 612.2 L1350.9 628.8 L1351.5 614.4 L1352.4 626.5 L1353.3 604.9 L1354.2 623.3 L1354.8 613.5 L1355.4 629.6 L1356.1 609.0 L1356.8 628.9 L1357.0 612.4" fill="none" stroke="#ffff00" stroke-width="1.05" stroke-linejoin="miter"/></svg>
<div class="a" style="left:1082px;top:483px;width:3px;height:1px;background:#a8d8ee"></div>
<svg class="a" style="left:0;top:0" width="1652" height="863" shape-rendering="crispEdges"><g stroke="#a8d8ee" stroke-width="1"><line x1="744.5" y1="620" x2="744.5" y2="739"/><line x1="807.5" y1="622" x2="807.5" y2="735"/><line x1="723" y1="665.5" x2="835" y2="665.5"/></g><g stroke="#a8d8ee" stroke-width="1" shape-rendering="auto"><line x1="734" y1="675" x2="752" y2="658"/><line x1="801" y1="676" x2="818" y2="657"/></g></svg>
<div class="t" style="left:820px;top:684px;font-size:16px;color:#aad8f0;font-weight:bold;font-family:'Liberation Sans', sans-serif;letter-spacing:1.25px">BW = 1172 - 820 = 352 Hz</div>
<div class="a" style="left:1404px;top:188px;width:247px;height:561px;background:rgba(0,0,0,0.10);filter:blur(2px)"></div>
<div class="a" style="left:1405px;top:186px;width:244px;height:559px;background:#f0f0f0;border:1px solid #9a9a9a"></div>
<div class="a" style="left:1406px;top:187px;width:242px;height:25px;background:#fff"></div>
<svg class="a" style="left:1409px;top:191px" width="16" height="16" viewBox="0 0 16 16"><rect width="16" height="16" fill="#ffff00"/><path d="M0 4V1h4v3h4V1h4v3h4V1" stroke="#ff0000" fill="none" stroke-width="1.4"/><path d="M0 10V7h4v3h4V7h4v3h4V7" stroke="#00d000" fill="none" stroke-width="1.4"/><path d="M0 15l3-3 3 3 3-3 3 3 3-3" stroke="#0000ff" fill="none" stroke-width="1.2"/></svg>
<div class="t" style="left:1430px;top:193px;font-size:12px;color:#9a9a9a;font-weight:normal;font-family:'Liberation Sans', sans-serif;">Signal Gener...</div>
<div class="a" style="left:1528px;top:199px;width:11px;height:1px;background:#9a9a9a"></div>
<div class="a" style="left:1574px;top:193px;width:11px;height:11px;border:1px solid #d0d0d0"></div>
<svg class="a" style="left:1619px;top:193px" width="12" height="12"><path d="M1 1L11 11M11 1L1 11" stroke="#9a9a9a" stroke-width="1"/></svg>
<div class="chk" style="left:1411px;top:220px;width:13px;height:13px;"><svg class="a" style="left:1px;top:1px" width="11" height="11"><path d="M1.5 5L4 7.5 9 2.5" stroke="#000" stroke-width="2" fill="none"/></svg></div>
<div class="t" style="left:1429px;top:221px;font-size:11.5px;color:#000;font-weight:normal;font-family:'Liberation Sans', sans-serif;letter-spacing:-0.45px;">Show Editor</div>
<div class="cb" style="left:1492px;top:218px;width:126px;height:19px;"><div class="dd"></div></div>
<div class="t" style="left:1496px;top:222px;font-size:11.5px;color:#000;font-weight:normal;font-family:'Liberation Sans', sans-serif;letter-spacing:-0.45px;">No Loopback</div>
<div class="btn" style="left:1621px;top:215px;width:24px;height:22px;"><svg class="a" style="left:6px;top:4px" width="12" height="12"><path d="M0 0L12 6L0 12Z" fill="#ff0000"/></svg></div>
<div class="t" style="left:1409px;top:247px;font-size:11.5px;color:#8a8a8a;font-weight:normal;font-family:'Liberation Sans', sans-serif;letter-spacing:-0.45px;">Start OSC after (s)</div>
<div class="cb dis" style="left:1502px;top:244px;width:67px;height:18px;"></div>
<div class="t" style="left:1506px;top:248px;font-size:11.5px;color:#8a8a8a;font-weight:normal;font-family:'Liberation Sans', sans-serif;letter-spacing:-0.45px;">0</div>
<div class="chk dis" style="left:1571px;top:246px;width:13px;height:13px;"></div>
<div class="t" style="left:1589px;top:247px;font-size:11.5px;color:#8a8a8a;font-weight:normal;font-family:'Liberation Sans', sans-serif;letter-spacing:-0.45px;">Echo Only</div>
<div class="a" style="left:1408px;top:275px;width:209px;height:37px;border:1px solid #a0a0a0;box-shadow:inset 1px 1px #fff,1px 1px #fff"></div>
<div class="a" style="left:1414px;top:270px;width:102px;height:12px;background:#f0f0f0"></div>
<div class="t" style="left:1417px;top:270px;font-size:11.5px;color:#000;font-weight:normal;font-family:'Liberation Sans', sans-serif;letter-spacing:-0.45px;">Sampling Parameters</div>
<div class="cb" style="left:1414px;top:285px;width:100px;height:20px;"><div class="dd"></div></div>
<div class="t" style="left:1418px;top:290px;font-size:11.5px;color:#000;font-weight:normal;font-family:'Liberation Sans', sans-serif;letter-spacing:-0.45px;">48kHz</div>
<div class="cb" style="left:1516px;top:285px;width:44px;height:20px;"><div class="dd"></div></div>
<div class="t" style="left:1520px;top:290px;font-size:11.5px;color:#000;font-weight:normal;font-family:'Liberation Sans', sans-serif;letter-spacing:-0.45px;">A&amp;B</div>
<div class="cb" style="left:1562px;top:285px;width:51px;height:20px;"><div class="dd"></div></div>
<div class="t" style="left:1566px;top:290px;font-size:11.5px;color:#000;font-weight:normal;font-family:'Liberation Sans', sans-serif;letter-spacing:-0.45px;">24Bit</div>
<div class="btn" style="left:1621px;top:269px;width:24px;height:22px;"><svg class="a" style="left:4px;top:3px" width="15" height="15" viewBox="0 0 15 15"><rect x="0.5" y="0.5" width="14" height="14" fill="#808000" stroke="#000"/><rect x="3" y="1" width="9" height="6" fill="#fff"/><rect x="3" y="10" width="9" height="4" fill="#000"/></svg></div>
<div class="btn" style="left:1621px;top:293px;width:24px;height:23px;"><svg class="a" style="left:3px;top:3px" width="17" height="16" viewBox="0 0 17 16"><path d="M0 4h17M0 7h17M0 10h17M0 13h17" stroke="#ff0000" stroke-width="0.6"/><path d="M5 13V3l9-2v10" stroke="#ff0000" stroke-width="1.4" fill="none"/><circle cx="3.5" cy="13" r="2" fill="#ff0000"/><circle cx="12.5" cy="11" r="2" fill="#ff0000"/></svg></div>
<div class="cb" style="left:1417px;top:323px;width:85px;height:20px;"><div class="dd"></div></div>
<div class="t" style="left:1421px;top:328px;font-size:11.5px;color:#000;font-weight:normal;font-family:'Liberation Sans', sans-serif;letter-spacing:-0.45px;">Sine</div>
<div class="btn" style="left:1514px;top:323px;width:23px;height:20px;"></div>
<div class="t" style="left:1514px;top:329px;font-size:11.5px;color:#000;font-weight:normal;font-family:'Liberation Sans', sans-serif;letter-spacing:-0.45px;width:23px;text-align:center">...</div>
<div class="cb" style="left:1551px;top:323px;width:83px;height:20px;"><div class="dd"></div></div>
<div class="t" style="left:1555px;top:328px;font-size:11.5px;color:#000;font-weight:normal;font-family:'Liberation Sans', sans-serif;letter-spacing:-0.45px;">Sine</div>
<div class="cb" style="left:1409px;top:352px;width:61px;height:20px;"></div>
<div class="t" style="left:1413px;top:357px;font-size:11.5px;color:#000;font-weight:normal;font-family:'Liberation Sans', sans-serif;letter-spacing:-0.45px;">0</div>
<div class="btn" style="left:1472px;top:352px;width:17px;height:10px;"><div class="a" style="left:6px;top:3px;border-left:2px solid transparent;border-right:2px solid transparent;border-bottom:2px solid #000"></div></div>
<div class="btn" style="left:1472px;top:362px;width:17px;height:10px;"><div class="a" style="left:6px;top:4px;border-left:2px solid transparent;border-right:2px solid transparent;border-top:2px solid #000"></div></div>
<div class="t" style="left:1495px;top:357px;font-size:11.5px;color:#000;font-weight:normal;font-family:'Liberation Sans', sans-serif;letter-spacing:-0.45px;">DC Offset (V)</div>
<div class="cb" style="left:1565px;top:352px;width:62px;height:20px;"></div>
<div class="t" style="left:1569px;top:357px;font-size:11.5px;color:#000;font-weight:normal;font-family:'Liberation Sans', sans-serif;letter-spacing:-0.45px;">0</div>
<div class="btn" style="left:1629px;top:352px;width:17px;height:10px;"><div class="a" style="left:6px;top:3px;border-left:2px solid transparent;border-right:2px solid transparent;border-bottom:2px solid #000"></div></div>
<div class="btn" style="left:1629px;top:362px;width:17px;height:10px;"><div class="a" style="left:6px;top:4px;border-left:2px solid transparent;border-right:2px solid transparent;border-top:2px solid #000"></div></div>
<div class="t" style="left:1471px;top:379px;font-size:11.5px;color:#000;font-weight:normal;font-family:'Liberation Sans', sans-serif;letter-spacing:-0.45px;">Output Frequency (Hz)</div>
<div class="cb" style="left:1441px;top:397px;width:87px;height:20px;"><div class="dd"></div></div>
<div class="t" style="left:1445px;top:402px;font-size:11.5px;color:#000;font-weight:normal;font-family:'Liberation Sans', sans-serif;letter-spacing:-0.45px;">1000</div>
<div class="cb" style="left:1530px;top:397px;width:86px;height:20px;"><div class="dd"></div></div>
<div class="t" style="left:1534px;top:402px;font-size:11.5px;color:#000;font-weight:normal;font-family:'Liberation Sans', sans-serif;letter-spacing:-0.45px;">1000</div>
<div class="t" style="left:1474px;top:428px;font-size:11.5px;color:#000;font-weight:normal;font-family:'Liberation Sans', sans-serif;letter-spacing:-0.45px;">Output Amplitude (V)</div>
<div class="cb" style="left:1441px;top:449px;width:87px;height:20px;"><div class="dd"></div></div>
<div class="t" style="left:1445px;top:454px;font-size:11.5px;color:#000;font-weight:normal;font-family:'Liberation Sans', sans-serif;letter-spacing:-0.45px;">1</div>
<div class="cb" style="left:1530px;top:449px;width:86px;height:20px;"><div class="dd"></div></div>
<div class="t" style="left:1534px;top:454px;font-size:11.5px;color:#000;font-weight:normal;font-family:'Liberation Sans', sans-serif;letter-spacing:-0.45px;">1</div>
<div class="t" style="left:1445px;top:480px;font-size:11.5px;color:#000;font-weight:normal;font-family:'Liberation Sans', sans-serif;letter-spacing:-0.45px;">Output Phase Difference (Degree)</div>
<div class="cb" style="left:1489px;top:501px;width:73px;height:19px;"><div class="dd"></div></div>
<div class="t" style="left:1493px;top:505px;font-size:11.5px;color:#000;font-weight:normal;font-family:'Liberation Sans', sans-serif;letter-spacing:-0.45px;">0</div>
<div class="a" style="left:1414px;top:387px;width:3px;height:133px;border:1px solid;border-color:#a0a0a0 #fff #fff #a0a0a0;background:#e3e3e3"></div>
<svg class="a" style="left:1410px;top:511px" width="11" height="11"><path d="M0.5 0.5h10v3h-10z" fill="#f0f0f0" stroke="#7a7a7a"/><path d="M5.5 3.5v7" stroke="#7a7a7a"/></svg>
<div class="a" style="left:1429px;top:387px;width:3px;height:133px;border:1px solid;border-color:#a0a0a0 #fff #fff #a0a0a0;background:#e3e3e3"></div>
<svg class="a" style="left:1425px;top:508px" width="11" height="11"><path d="M0.5 0.5h10v3h-10z" fill="#f0f0f0" stroke="#7a7a7a"/><path d="M5.5 3.5v7" stroke="#7a7a7a"/></svg>
<div class="a" style="left:1623px;top:387px;width:3px;height:133px;border:1px solid;border-color:#a0a0a0 #fff #fff #a0a0a0;background:#e3e3e3"></div>
<svg class="a" style="left:1619px;top:508px" width="11" height="11"><path d="M0.5 0.5h10v3h-10z" fill="#f0f0f0" stroke="#7a7a7a"/><path d="M5.5 3.5v7" stroke="#7a7a7a"/></svg>
<div class="a" style="left:1636px;top:387px;width:3px;height:133px;border:1px solid;border-color:#a0a0a0 #fff #fff #a0a0a0;background:#e3e3e3"></div>
<svg class="a" style="left:1632px;top:511px" width="11" height="11"><path d="M0.5 0.5h10v3h-10z" fill="#f0f0f0" stroke="#7a7a7a"/><path d="M5.5 3.5v7" stroke="#7a7a7a"/></svg>
<div class="t" style="left:1409px;top:525px;font-size:11.5px;color:#000;font-weight:normal;font-family:'Liberation Sans', sans-serif;letter-spacing:-0.45px;">-3.01dBV</div>
<div class="a" style="left:1464px;top:529px;width:121px;height:3px;border:1px solid;border-color:#a0a0a0 #fff #fff #a0a0a0;background:#e3e3e3"></div>
<div class="a" style="left:1523px;top:525px;width:6px;height:11px;background:#f0f0f0;border:1px solid;border-color:#fff #7a7a7a #7a7a7a #fff"></div>
<div class="t" style="left:1598px;top:525px;font-size:11.5px;color:#000;font-weight:normal;font-family:'Liberation Sans', sans-serif;letter-spacing:-0.45px;">-3.01dBV</div>
<div class="a" style="left:1408px;top:543px;width:238px;height:47px;border:1px solid #a0a0a0;box-shadow:inset 1px 1px #fff,1px 1px #fff"></div>
<div class="chk" style="left:1415px;top:549px;width:13px;height:13px;"></div>
<div class="t" style="left:1433px;top:550px;font-size:11.5px;color:#000;font-weight:normal;font-family:'Liberation Sans', sans-serif;letter-spacing:-0.45px;">Mask</div>
<div class="t" style="left:1515px;top:551px;font-size:11.5px;color:#8a8a8a;font-weight:normal;font-family:'Liberation Sans', sans-serif;letter-spacing:-0.45px;">On (s)</div>
<div class="t" style="left:1590px;top:551px;font-size:11.5px;color:#8a8a8a;font-weight:normal;font-family:'Liberation Sans', sans-serif;letter-spacing:-0.45px;">Off (s)</div>
<div class="chk dis" style="left:1415px;top:569px;width:13px;height:13px;"><svg class="a" style="left:1px;top:1px" width="11" height="11"><path d="M1.5 5L4 7.5 9 2.5" stroke="#a0a0a0" stroke-width="2" fill="none"/></svg></div>
<div class="t" style="left:1433px;top:570px;font-size:11.5px;color:#8a8a8a;font-weight:normal;font-family:'Liberation Sans', sans-serif;letter-spacing:-0.45px;">Phase Lock</div>
<div class="cb dis" style="left:1501px;top:567px;width:65px;height:19px;"></div>
<div class="t" style="left:1505px;top:571px;font-size:11.5px;color:#8a8a8a;font-weight:normal;font-family:'Liberation Sans', sans-serif;letter-spacing:-0.45px;">1</div>
<div class="cb dis" style="left:1575px;top:567px;width:64px;height:19px;"></div>
<div class="t" style="left:1579px;top:571px;font-size:11.5px;color:#8a8a8a;font-weight:normal;font-family:'Liberation Sans', sans-serif;letter-spacing:-0.45px;">0</div>
<div class="a" style="left:1408px;top:595px;width:238px;height:45px;border:1px solid #a0a0a0;box-shadow:inset 1px 1px #fff,1px 1px #fff"></div>
<div class="chk" style="left:1415px;top:610px;width:13px;height:13px;"></div>
<div class="t" style="left:1433px;top:611px;font-size:11.5px;color:#000;font-weight:normal;font-family:'Liberation Sans', sans-serif;letter-spacing:-0.45px;">Fade</div>
<div class="t" style="left:1515px;top:601px;font-size:11.5px;color:#8a8a8a;font-weight:normal;font-family:'Liberation Sans', sans-serif;letter-spacing:-0.45px;">In (s)</div>
<div class="t" style="left:1590px;top:601px;font-size:11.5px;color:#8a8a8a;font-weight:normal;font-family:'Liberation Sans', sans-serif;letter-spacing:-0.45px;">Out (s)</div>
<div class="cb dis" style="left:1501px;top:617px;width:65px;height:20px;"></div>
<div class="t" style="left:1505px;top:622px;font-size:11.5px;color:#8a8a8a;font-weight:normal;font-family:'Liberation Sans', sans-serif;letter-spacing:-0.45px;">0.01</div>
<div class="cb dis" style="left:1575px;top:617px;width:64px;height:20px;"></div>
<div class="t" style="left:1579px;top:622px;font-size:11.5px;color:#8a8a8a;font-weight:normal;font-family:'Liberation Sans', sans-serif;letter-spacing:-0.45px;">0.01</div>
<div class="a" style="left:1408px;top:644px;width:238px;height:48px;border:1px solid #a0a0a0;box-shadow:inset 1px 1px #fff,1px 1px #fff"></div>
<div class="t" style="left:1411px;top:650px;font-size:11.5px;color:#000;font-weight:normal;font-family:'Liberation Sans', sans-serif;letter-spacing:-0.45px;">Modulation</div>
<div class="t" style="left:1484px;top:650px;font-size:11.5px;color:#8a8a8a;font-weight:normal;font-family:'Liberation Sans', sans-serif;letter-spacing:-0.45px;">Carrier (Hz)</div>
<div class="t" style="left:1559px;top:650px;font-size:11.5px;color:#8a8a8a;font-weight:normal;font-family:'Liberation Sans', sans-serif;letter-spacing:-0.45px;">Mod. Index (%)</div>
<div class="cb" style="left:1411px;top:667px;width:57px;height:20px;"><div class="dd"></div></div>
<div class="t" style="left:1415px;top:672px;font-size:11.5px;color:#000;font-weight:normal;font-family:'Liberation Sans', sans-serif;letter-spacing:-0.45px;">NIL</div>
<div class="cb dis" style="left:1484px;top:667px;width:65px;height:20px;"></div>
<div class="t" style="left:1488px;top:672px;font-size:11.5px;color:#8a8a8a;font-weight:normal;font-family:'Liberation Sans', sans-serif;letter-spacing:-0.45px;">0</div>
<div class="cb dis" style="left:1565px;top:667px;width:65px;height:20px;"></div>
<div class="t" style="left:1569px;top:672px;font-size:11.5px;color:#8a8a8a;font-weight:normal;font-family:'Liberation Sans', sans-serif;letter-spacing:-0.45px;">0</div>
<div class="t" style="left:1408px;top:701px;font-size:11.5px;color:#000;font-weight:normal;font-family:'Liberation Sans', sans-serif;letter-spacing:-0.45px;">Duration (s)</div>
<div class="cb dis" style="left:1472px;top:698px;width:65px;height:20px;"></div>
<div class="t" style="left:1476px;top:703px;font-size:11.5px;color:#8a8a8a;font-weight:normal;font-family:'Liberation Sans', sans-serif;letter-spacing:-0.45px;">1</div>
<div class="chk" style="left:1544px;top:701px;width:13px;height:13px;"><svg class="a" style="left:1px;top:1px" width="11" height="11"><path d="M1.5 5L4 7.5 9 2.5" stroke="#000" stroke-width="2" fill="none"/></svg></div>
<div class="t" style="left:1562px;top:703px;font-size:11.5px;color:#000;font-weight:normal;font-family:'Liberation Sans', sans-serif;letter-spacing:-0.45px;">Loop</div>
<div class="chk dis" style="left:1600px;top:701px;width:13px;height:13px;"></div>
<div class="t" style="left:1618px;top:703px;font-size:11.5px;color:#8a8a8a;font-weight:normal;font-family:'Liberation Sans', sans-serif;letter-spacing:-0.45px;">DDS</div>
<div class="chk" style="left:1408px;top:725px;width:13px;height:13px;"></div>
<div class="t" style="left:1426px;top:727px;font-size:11.5px;color:#000;font-weight:normal;font-family:'Liberation Sans', sans-serif;letter-spacing:-0.45px;">Sweep</div>
<svg class="a" style="left:1485px;top:725px" width="12" height="12"><circle cx="6" cy="6" r="5.5" fill="#f0f0f0" stroke="#b0b0b0"/><circle cx="6" cy="6" r="2" fill="#a0a0a0"/></svg>
<div class="t" style="left:1502px;top:727px;font-size:11.5px;color:#8a8a8a;font-weight:normal;font-family:'Liberation Sans', sans-serif;letter-spacing:-0.45px;">Frequency</div>
<svg class="a" style="left:1566px;top:725px" width="12" height="12"><circle cx="6" cy="6" r="5.5" fill="#f0f0f0" stroke="#b0b0b0"/></svg>
<div class="t" style="left:1583px;top:727px;font-size:11.5px;color:#8a8a8a;font-weight:normal;font-family:'Liberation Sans', sans-serif;letter-spacing:-0.45px;">Amplitude</div>
<div class="a" style="left:1649px;top:98px;width:2px;height:737px;background:#fff"></div>
<div class="a" style="left:1px;top:835px;width:1650px;height:1px;background:#696969"></div>
<div class="a" style="left:1px;top:836px;width:1650px;height:1px;background:#fff"></div>
<div class="a" style="left:1px;top:837px;width:1650px;height:26px;background:#f0f0f0"></div>
<div class="a" style="left:1px;top:861px;width:1650px;height:1px;background:#fff"></div>
<div class="a" style="left:1px;top:862px;width:1650px;height:1px;background:#5a5a5a"></div>
<div class="a" style="left:5px;top:839px;width:1px;height:21px;background:#fff"></div>
<div class="a" style="left:6px;top:839px;width:1px;height:21px;background:#a0a0a0"></div>
<div class="t" style="left:17px;top:843px;font-size:13.3px;color:#000;font-weight:bold;font-family:'Liberation Sans', sans-serif;">F</div>
<div class="cb" style="left:32px;top:838px;width:129px;height:22px;"><div class="dd "></div></div>
<div class="t" style="left:36px;top:843.0px;font-size:13.3px;color:#000;font-weight:bold;font-family:'Liberation Sans', sans-serif;">Auto</div>
<div class="cb" style="left:163px;top:838px;width:101px;height:22px;"><div class="dd "></div></div>
<div class="t" style="left:167px;top:843px;font-size:14px;color:#000;font-weight:normal;font-family:'Liberation Sans', sans-serif;">X1</div>
<div class="t" style="left:267px;top:843px;font-size:13.3px;color:#000;font-weight:bold;font-family:'Liberation Sans', sans-serif;">A</div>
<div class="cb blk" style="left:285px;top:838px;width:130px;height:22px;"><div class="dd "></div></div>
<div class="t" style="left:289px;top:843px;font-size:14px;color:#ffff00;font-weight:bold;font-family:'Liberation Sans', sans-serif;">-200dB</div>
<div class="cb blk" style="left:417px;top:838px;width:93px;height:22px;"><div class="dd "></div></div>
<div class="t" style="left:421px;top:843px;font-size:14px;color:#ffff00;font-weight:bold;font-family:'Liberation Sans', sans-serif;">Off</div>
<div class="t" style="left:512px;top:843px;font-size:13.3px;color:#000;font-weight:bold;font-family:'Liberation Sans', sans-serif;">M</div>
<div class="cb" style="left:533px;top:838px;width:263px;height:22px;"><div class="dd "></div></div>
<div class="t" style="left:537px;top:843.0px;font-size:13.3px;color:#000;font-weight:bold;font-family:'Liberation Sans', sans-serif;">Amplitude Spectrum</div>
<div class="t" style="left:798px;top:843px;font-size:13.3px;color:#000;font-weight:bold;font-family:'Liberation Sans', sans-serif;">B</div>
<div class="cb blk" style="left:817px;top:838px;width:130px;height:22px;"><div class="dd g"></div></div>
<div class="t" style="left:821px;top:843px;font-size:14px;color:#808080;font-weight:bold;font-family:'Liberation Sans', sans-serif;">Off</div>
<div class="cb blk" style="left:949px;top:838px;width:94px;height:22px;"><div class="dd g"></div></div>
<div class="t" style="left:953px;top:843px;font-size:14px;color:#808080;font-weight:bold;font-family:'Liberation Sans', sans-serif;">Off</div>
<div class="t" style="left:1045px;top:843px;font-size:13.3px;color:#000;font-weight:bold;font-family:'Liberation Sans', sans-serif;">FFT</div>
<div class="cb" style="left:1084px;top:838px;width:135px;height:22px;"><div class="dd "></div></div>
<div class="t" style="left:1088px;top:843.0px;font-size:13.3px;color:#000;font-weight:bold;font-family:'Liberation Sans', sans-serif;">2048</div>
<div class="t" style="left:1220px;top:843px;font-size:13.3px;color:#000;font-weight:bold;font-family:'Liberation Sans', sans-serif;">WND</div>
<div class="cb" style="left:1283px;top:838px;width:255px;height:22px;"><div class="dd "></div></div>
<div class="t" style="left:1287px;top:843.0px;font-size:13.3px;color:#000;font-weight:bold;font-family:'Liberation Sans', sans-serif;">Kaiser 6</div>
<div class="cb dis" style="left:1541px;top:838px;width:106px;height:22px;"><div class="dd g"></div></div>
<div class="t" style="left:1545px;top:843.0px;font-size:13.3px;color:#a0a0a0;font-weight:bold;font-family:'Liberation Sans', sans-serif;">0%</div>
</body></html>
